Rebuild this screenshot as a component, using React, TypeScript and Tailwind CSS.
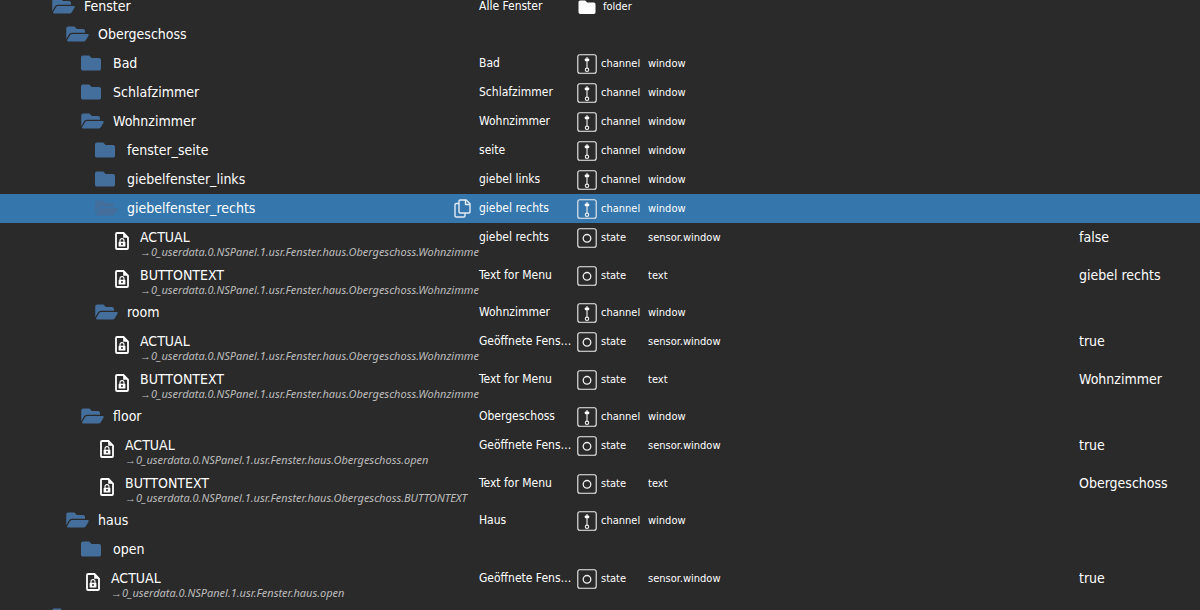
import type { ReactNode } from 'react';

type Kind = 'folder' | 'channel' | 'state';

type Row = {
    id: string;
    label: string;
    level: number;
    open?: boolean;
    path?: string;
    name?: string;
    kind?: Kind;
    role?: string;
    value?: string;
};

const BASE = '0_userdata.0.NSPanel.1.usr.Fenster.haus';

const rows: Row[] = [
    { id: 'fenster', label: 'Fenster', level: 0, open: true, name: 'Alle Fenster', kind: 'folder' },
    { id: 'og', label: 'Obergeschoss', level: 1, open: true },
    { id: 'bad', label: 'Bad', level: 2, name: 'Bad', kind: 'channel', role: 'window' },
    { id: 'schlaf', label: 'Schlafzimmer', level: 2, name: 'Schlafzimmer', kind: 'channel', role: 'window' },
    { id: 'wohn', label: 'Wohnzimmer', level: 2, open: true, name: 'Wohnzimmer', kind: 'channel', role: 'window' },
    { id: 'seite', label: 'fenster_seite', level: 3, name: 'seite', kind: 'channel', role: 'window' },
    { id: 'links', label: 'giebelfenster_links', level: 3, name: 'giebel links', kind: 'channel', role: 'window' },
    { id: 'rechts', label: 'giebelfenster_rechts', level: 3, open: true, name: 'giebel rechts', kind: 'channel', role: 'window' },
    { id: 'rechts.a', label: 'ACTUAL', level: 4, path: `${BASE}.Obergeschoss.Wohnzimme`, name: 'giebel rechts', kind: 'state', role: 'sensor.window', value: 'false' },
    { id: 'rechts.b', label: 'BUTTONTEXT', level: 4, path: `${BASE}.Obergeschoss.Wohnzimme`, name: 'Text for Menu', kind: 'state', role: 'text', value: 'giebel rechts' },
    { id: 'room', label: 'room', level: 3, open: true, name: 'Wohnzimmer', kind: 'channel', role: 'window' },
    { id: 'room.a', label: 'ACTUAL', level: 4, path: `${BASE}.Obergeschoss.Wohnzimme`, name: 'Geöffnete Fenster', kind: 'state', role: 'sensor.window', value: 'true' },
    { id: 'room.b', label: 'BUTTONTEXT', level: 4, path: `${BASE}.Obergeschoss.Wohnzimme`, name: 'Text for Menu', kind: 'state', role: 'text', value: 'Wohnzimmer' },
    { id: 'floor', label: 'floor', level: 2, open: true, name: 'Obergeschoss', kind: 'channel', role: 'window' },
    { id: 'floor.a', label: 'ACTUAL', level: 3, path: `${BASE}.Obergeschoss.open`, name: 'Geöffnete Fenster', kind: 'state', role: 'sensor.window', value: 'true' },
    { id: 'floor.b', label: 'BUTTONTEXT', level: 3, path: `${BASE}.Obergeschoss.BUTTONTEXT`, name: 'Text for Menu', kind: 'state', role: 'text', value: 'Obergeschoss' },
    { id: 'haus', label: 'haus', level: 1, open: true, name: 'Haus', kind: 'channel', role: 'window' },
    { id: 'open', label: 'open', level: 2 },
    { id: 'haus.a', label: 'ACTUAL', level: 2, path: `${BASE}.open`, name: 'Geöffnete Fenster', kind: 'state', role: 'sensor.window', value: 'true' },
    { id: 'next', label: '', level: 0, open: true },
];

const SELECTED = 'rechts';

const folderIndent = ['pl-[52px]', 'pl-[66px]', 'pl-[81px]', 'pl-[95px]', 'pl-[109px]'];
const stateIndent = ['pl-[58px]', 'pl-[72px]', 'pl-[86px]', 'pl-[100px]', 'pl-[115px]'];

function FolderIcon({ open }: { open?: boolean }) {
    return open ? (
        <svg viewBox="0 0 576 512" className="h-5 w-[23px]" fill="currentColor" aria-hidden="true">
            <path d="M572.694 292.093L500.27 416.248A63.997 63.997 0 0 1 444.989 448H45.025c-18.523 0-30.064-20.093-20.731-36.093l72.424-124.155A64 64 0 0 1 152 256h399.964c18.523 0 30.064 20.093 20.73 36.093zM152 224h328v-48c0-26.51-21.49-48-48-48H272l-64-64H48C21.49 64 0 85.49 0 112v278.046l69.077-118.418C86.214 242.25 117.989 224 152 224z" />
        </svg>
    ) : (
        <svg viewBox="0 0 512 512" className="h-5 w-5" fill="currentColor" aria-hidden="true">
            <path d="M464 128H272l-54.63-54.63c-6-6-14.14-9.37-22.63-9.37H48C21.49 64 0 85.49 0 112v288c0 26.51 21.49 48 48 48h416c26.51 0 48-21.49 48-48V176c0-26.51-21.49-48-48-48z" />
        </svg>
    );
}

function LockedFileIcon() {
    return (
        <svg viewBox="0 0 14 18" className="mt-[9px] h-[18px] w-[14px] shrink-0" fill="none" aria-hidden="true">
            <path d="M2 1h6.5L13 5.5V16a1 1 0 0 1-1 1H2a1 1 0 0 1-1-1V2a1 1 0 0 1 1-1z" stroke="#fff" strokeWidth="1.8" />
            <path d="M8.2 1v4.8H13z" fill="#fff" />
            <path d="M5 10V8.6a2 2 0 0 1 4 0V10" stroke="#fff" strokeWidth="1.1" />
            <path fillRule="evenodd" d="M4.2 9.7h5.6a.6.6 0 0 1 .6.6v3.6a.6.6 0 0 1-.6.6H4.2a.6.6 0 0 1-.6-.6v-3.6a.6.6 0 0 1 .6-.6zM7 11.1a1 1 0 1 0 0 2 1 1 0 0 0 0-2z" fill="#fff" />
        </svg>
    );
}

function KindIcon({ kind }: { kind: Kind }) {
    if (kind === 'folder') {
        return (
            <svg viewBox="0 0 20 20" className="h-5 w-5" fill="#fff" aria-hidden="true">
                <path d="M3.2 3.4h5l2 2h6.6a1.7 1.7 0 0 1 1.7 1.7v8.2a1.7 1.7 0 0 1-1.7 1.7H3.2a1.7 1.7 0 0 1-1.7-1.7V5.1a1.7 1.7 0 0 1 1.7-1.7z" />
            </svg>
        );
    }
    return (
        <svg viewBox="0 0 20 20" className="h-5 w-5" fill="none" stroke="#f0f0f0" aria-hidden="true">
            <rect x="0.8" y="0.8" width="18.4" height="18.4" rx="2" strokeWidth="1.1" />
            {kind === 'channel' ? (
                <>
                    <path d="M10 3v11" strokeWidth="1.1" />
                    <rect x="7.8" y="4.4" width="4.4" height="2.8" rx="0.8" fill="#fff" stroke="none" />
                    <circle cx="10" cy="15.8" r="1.7" strokeWidth="1.1" />
                </>
            ) : (
                <circle cx="10" cy="10.3" r="3.8" strokeWidth="1.3" />
            )}
        </svg>
    );
}

function CopyIcon() {
    return (
        <svg viewBox="0 0 17 19" className="h-[19px] w-[17px]" fill="none" stroke="#e3edf5" strokeWidth="1.4" strokeLinejoin="round" aria-hidden="true">
            <path d="M6.2 1h6l3.8 3.8v8a1.2 1.2 0 0 1-1.2 1.2H6.2A1.2 1.2 0 0 1 5 12.8V2.2A1.2 1.2 0 0 1 6.2 1z" />
            <path d="M11.5 1v4.5H16" />
            <path d="M5 4.5H2.2A1.2 1.2 0 0 0 1 5.7v11A1.2 1.2 0 0 0 2.2 18h7.6a1.2 1.2 0 0 0 1.2-1.2V14" />
        </svg>
    );
}

function rowHeight(row: Row) {
    if (row.level === 0) return 'h-7';
    if (!row.path) return 'h-[29px]';
    return row.role === 'text' ? 'h-[37px]' : 'h-[38px]';
}

function Cell({ children, className = '' }: { children?: ReactNode; className?: string }) {
    return <td className={`p-0 align-top leading-7 ${className}`}>{children}</td>;
}

function ObjectRow({ row }: { row: Row }) {
    const selected = row.id === SELECTED;

    return (
        <tr className={`${rowHeight(row)} ${selected ? 'bg-[#3577ac]' : ''}`} aria-selected={selected}>
            <Cell>
                {row.path ? (
                    <div className={`flex items-start gap-[11px] ${stateIndent[row.level]}`}>
                        <LockedFileIcon />
                        <div className="min-w-0 flex-1 pt-[6px]">
                            <div className="text-[14px] leading-4">{row.label}</div>
                            <div className="whitespace-nowrap font-['Noto_Sans',sans-serif] text-[11px] italic leading-[14px] text-[#bdbdbd]">→{row.path}</div>
                        </div>
                    </div>
                ) : (
                    <div className={`flex h-7 items-center pr-[6px] ${folderIndent[row.level]}`}>
                        <span className="w-8 shrink-0 text-[#446e9b]">
                            <FolderIcon open={row.open} />
                        </span>
                        <span className="flex-1 text-[14px]">{row.label}</span>
                        {selected && (
                            <button type="button" title="Copy" className="shrink-0">
                                <CopyIcon />
                            </button>
                        )}
                    </div>
                )}
            </Cell>
            <Cell className="truncate pl-[2px] text-[12px]">{row.name}</Cell>
            <Cell>
                {row.kind && (
                    <div className="flex h-7 items-center gap-1 pl-[2px] pt-[2px] text-[11px]">
                        <KindIcon kind={row.kind} />
                        <span className={row.kind === 'folder' ? 'pl-[2px]' : ''}>{row.kind}</span>
                    </div>
                )}
            </Cell>
            <Cell className="pl-[2px] text-[11px]">
                {row.role && <div className="pt-px">{row.role}</div>}
            </Cell>
            <Cell className="whitespace-nowrap pl-[2px] text-[14px]">{row.value}</Cell>
        </tr>
    );
}

export default function App() {
    return (
        <main className="h-screen overflow-hidden bg-[#2a2a2a] font-['DejaVu_Sans_Condensed','Noto_Sans',sans-serif] text-white">
            <table className="-mt-2 w-full table-fixed border-collapse">
                <colgroup>
                    <col className="w-[477px]" />
                    <col className="w-[98px]" />
                    <col className="w-[71px]" />
                    <col />
                    <col className="w-[123px]" />
                </colgroup>
                <tbody>
                    {rows.map((row) => (
                        <ObjectRow key={row.id} row={row} />
                    ))}
                </tbody>
            </table>
        </main>
    );
}
